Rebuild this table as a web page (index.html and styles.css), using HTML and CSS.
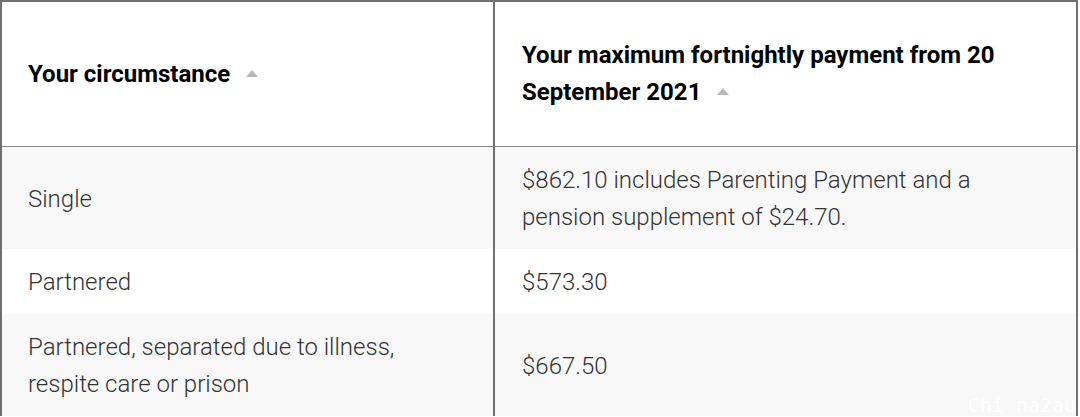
FILE: index.html
```html
<!DOCTYPE html>
<html lang="en">
<head>
<meta charset="utf-8">
<title>Parenting Payment rates</title>
<link rel="stylesheet" href="styles.css">
</head>
<body>
<div class="wrap">
  <table class="rates">
    <thead>
      <tr>
        <th class="col-a"><span class="th-text">Your circumstance</span><span class="sort"></span></th>
        <th class="col-b"><span class="th-text">Your maximum fortnightly payment from 20 September 2021</span><span class="sort"></span></th>
      </tr>
    </thead>
    <tbody>
      <tr class="shade">
        <td class="col-a">Single</td>
        <td class="col-b">$862.10 includes Parenting Payment and a pension supplement of $24.70.</td>
      </tr>
      <tr>
        <td class="col-a">Partnered</td>
        <td class="col-b">$573.30</td>
      </tr>
      <tr class="shade">
        <td class="col-a">Partnered, separated due to illness, respite care or prison</td>
        <td class="col-b">$667.50</td>
      </tr>
    </tbody>
  </table>
  <div class="watermark">Chi na2au</div>
</div>
</body>
</html>
```

FILE: styles.css
```css
html, body {
  margin: 0;
  padding: 0;
  background: #ffffff;
}
.wrap {
  position: relative;
  width: 1080px;
  height: 417px;
  overflow: hidden;
}
.rates {
  width: 1078px;
  border-collapse: separate;
  border-spacing: 0;
  border-left: 2px solid #707070;
  border-top: 2px solid #707070;
  border-right: 2px solid #707070;
  font-family: Roboto, "Liberation Sans", sans-serif;
  font-size: 24px;
  line-height: 37px;
  table-layout: fixed;
}
.rates .col-a {
  width: 439px;
  border-right: 2px solid #707070;
}
.rates th {
  text-align: left;
  font-weight: 700;
  color: #000;
  padding: 35px 26px 35px 26px;
  border-bottom: 1px solid #8a8a8a;
  vertical-align: middle;
}
.rates td {
  font-weight: 300;
  color: #333;
  padding: 15px 26px 13px 26px;
  vertical-align: middle;
}
.rates td.col-b, .rates th.col-b {
  padding-left: 27px;
  padding-right: 40px;
}
.rates tr.shade td {
  background: #f8f8f8;
}
.sort {
  display: inline-block;
  width: 0;
  height: 0;
  margin-left: 16px;
  border-left: 6px solid transparent;
  border-right: 6px solid transparent;
  border-bottom: 7px solid #b8b8b8;
  vertical-align: 5px;
}
.watermark {
  position: absolute;
  right: 4px;
  bottom: 0;
  font-family: "DejaVu Sans Mono", monospace;
  font-size: 20px;
  color: rgba(255,255,255,0.95);
}
```
